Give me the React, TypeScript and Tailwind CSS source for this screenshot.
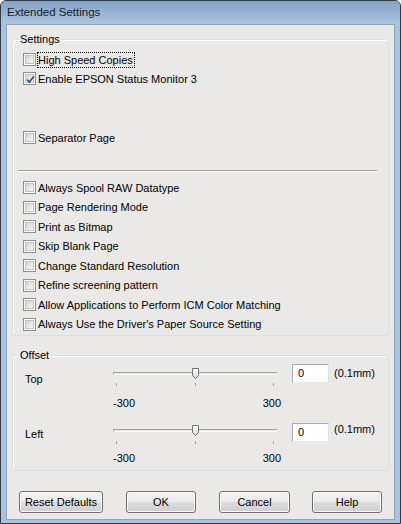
import type { ReactNode } from "react";

const FONT = { fontFamily: '"Liberation Sans", Arial, sans-serif' };

const BUTTON_CLASS =
  "flex h-[22px] items-center justify-center rounded-[3px] border border-[#707070] bg-[linear-gradient(to_bottom,#f2f2f2_0%,#ebebeb_50%,#dddddd_50%,#cfcfcf_100%)] text-[11px] text-black shadow-[inset_0_0_0_1px_#fbfbfb]";

function CheckBox({ checked }: { checked?: boolean }) {
  return (
    <span className="relative flex h-[13px] w-[13px] shrink-0 border border-[#8e8f8f] bg-white p-[1px]">
      <span className="h-full w-full border border-[#c4c4c4] bg-[linear-gradient(135deg,#d2d2d2_0%,#e8e8e8_55%,#f6f6f6_100%)]" />
      {checked && (
        <svg className="absolute left-[1px] top-[1px]" width="11" height="11" viewBox="0 0 11 11">
          <path d="M2 5.5 L4.3 8 L9 2.2" fill="none" stroke="#3b4f8c" strokeWidth="1.8" />
        </svg>
      )}
    </span>
  );
}

function CheckRow({ label, checked, focused, h = "h-[19.5px]", className = "" }: { label: string; checked?: boolean; focused?: boolean; h?: string; className?: string }) {
  return (
    <div className={`flex items-center gap-[1px] pl-[10px] ${h} ${className}`}>
      <CheckBox checked={checked} />
      <span
        className={`border leading-[14px] ${focused ? "border-dotted border-black pr-[1px]" : "border-transparent"}`}
      >
        {label}
      </span>
    </div>
  );
}

function GroupBox({ title, className = "", children }: { title: string; className?: string; children: ReactNode }) {
  return (
    <div className={`relative rounded-[3px] border border-[#d5dfe5] shadow-[inset_1px_1px_0_#ffffff] ${className}`}>
      <span className="absolute -top-[7px] left-[6px] bg-[#ebe9e7] px-[1px] leading-[13px]">{title}</span>
      {children}
    </div>
  );
}

function Thumb() {
  return (
    <svg width="7" height="11" viewBox="0 0 7 11">
      <defs>
        <linearGradient id="thumbFill" x1="0" y1="0" x2="0" y2="1">
          <stop offset="0" stopColor="#ffffff" />
          <stop offset="1" stopColor="#d6d6d6" />
        </linearGradient>
      </defs>
      <path d="M0.5 0.5 H6.5 V7.5 L3.5 10.5 L0.5 7.5 Z" fill="url(#thumbFill)" stroke="#6f6f6f" />
    </svg>
  );
}

interface OffsetRowProps {
  label: string;
  rowH: string;
  labelMt: string;
  thumbMt: string;
  tickMt: string;
  numMt: string;
  unitMt: string;
}

function OffsetRow({ label, rowH, labelMt, thumbMt, tickMt, numMt, unitMt }: OffsetRowProps) {
  return (
    <div className={`flex items-start pl-[12px] ${rowH}`}>
      <span className={`w-[88px] leading-[13px] ${labelMt}`}>{label}</span>
      <div className="flex w-[168px] flex-col">
        <div className={`relative h-[11px] w-[164px] ${thumbMt}`}>
          <div className="absolute left-0 top-[4px] h-[3px] w-[164px] border-t border-l border-[#a3a3a3] border-b border-b-white bg-[#e6e6e6]" />
          <div className="absolute left-[79px] top-0 flex">
            <Thumb />
          </div>
        </div>
        <div className={`flex h-[3px] w-[164px] justify-between px-[3px] ${tickMt}`}>
          <span className="w-[1px] bg-[#a0a0a0]" />
          <span className="w-[1px] bg-[#a0a0a0]" />
          <span className="w-[1px] bg-[#a0a0a0]" />
        </div>
        <div className={`flex justify-between leading-[13px] ${numMt}`}>
          <span>-300</span>
          <span>300</span>
        </div>
      </div>
      <div className="ml-[11px] flex h-[19px] w-[37px] items-center border border-[#abadb3] border-b-[#e3e9ef] border-r-[#dbdfe6] bg-white pl-[5px]">
        0
      </div>
      <span className={`ml-[5px] leading-[13px] ${unitMt}`}>(0.1mm)</span>
    </div>
  );
}

export default function App() {
  return (
    <div className="h-[524px] w-[401px] bg-white" style={FONT}>
      <div className="flex h-[524px] w-[401px] flex-col overflow-hidden rounded-t-[6px] border border-[#303b48] bg-[#a8c4e1] text-[11px] text-black">
        <div className="flex h-[23px] shrink-0 items-center bg-linear-to-b from-[#86a2c3] to-[#abc6e2] pl-[6px] text-[11.5px] text-[#1b1b1b]">
          Extended Settings
        </div>

        <div className="mx-[5px] mb-[3px] flex flex-1 flex-col border border-[#8fa5bd] bg-[#ebe9e7] px-[5px]">
          <GroupBox title="Settings" className="mt-[14px] pb-[1px] pt-[10px]">
            <CheckRow label="High Speed Copies" focused h="h-[19px]" />
            <CheckRow label="Enable EPSON Status Monitor 3" checked h="h-[19px]" />
            <CheckRow label="Separator Page" h="h-[19px]" className="mt-[40px]" />
            <div className="ml-[5px] mr-[11px] mt-[23px] border-t border-b border-t-[#a0a0a0] border-b-white" />
            <div className="mt-[6px] flex flex-col">
              <CheckRow label="Always Spool RAW Datatype" />
              <CheckRow label="Page Rendering Mode" />
              <CheckRow label="Print as Bitmap" />
              <CheckRow label="Skip Blank Page" />
              <CheckRow label="Change Standard Resolution" />
              <CheckRow label="Refine screening pattern" />
              <CheckRow label="Allow Applications to Perform ICM Color Matching" />
              <CheckRow label="Always Use the Driver's Paper Source Setting" />
            </div>
          </GroupBox>

          <GroupBox title="Offset" className="mt-[19px] pt-[8px]">
            <OffsetRow
              label="Top"
              rowH="h-[59px]"
              labelMt="mt-[9px]"
              thumbMt="mt-[4px]"
              tickMt="mt-[4px]"
              numMt="mt-[11px]"
              unitMt="mt-[3px]"
            />
            <OffsetRow
              label="Left"
              rowH="h-[47px]"
              labelMt="mt-[5px]"
              thumbMt="mt-[2px]"
              tickMt="mt-[5px]"
              numMt="mt-[8px]"
              unitMt="mt-[0px]"
            />
          </GroupBox>

          <div className="ml-[7px] mt-[20px] flex">
            <button className={`${BUTTON_CLASS} w-[84px]`}>Reset Defaults</button>
            <button className={`${BUTTON_CLASS} ml-[23px] w-[70px] border-[#3c7fb1] bg-[linear-gradient(to_bottom,#eaf6fd_0%,#d9f0fc_50%,#bee6fd_50%,#a7d9f5_100%)]`}>
              OK
            </button>
            <button className={`${BUTTON_CLASS} ml-[23px] w-[71px]`}>Cancel</button>
            <button className={`${BUTTON_CLASS} ml-[22px] w-[70px]`}>Help</button>
          </div>
        </div>
      </div>
    </div>
  );
}
